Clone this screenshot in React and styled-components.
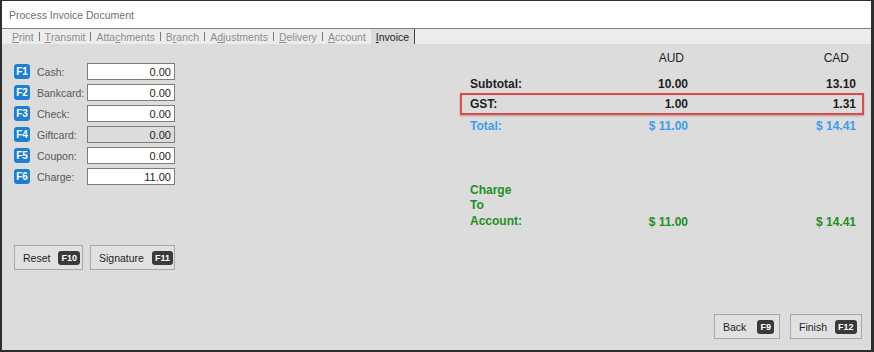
import React from "react";
import styled, { createGlobalStyle } from "styled-components";

const Global = createGlobalStyle`
  html, body { margin: 0; padding: 0; background: #ffffff; }
  body { font-family: "Liberation Sans", Arial, sans-serif; }
  * { box-sizing: border-box; }
`;

const Window = styled.div`
  width: 874px;
  height: 352px;
  display: flex;
  flex-direction: column;
  border-style: solid;
  border-color: #2e2e2e;
  border-width: 1px 3px 2px 2px;
  background: #dcdcdc;
  overflow: hidden;
`;

const TitleBar = styled.div`
  height: 28px;
  flex: none;
  background: #ffffff;
  border-bottom: 1px solid #7f7f7f;
  display: flex;
  align-items: center;
  padding-left: 7px;
  font-size: 10.5px;
  color: #707070;
`;

const TabStrip = styled.div`
  height: 15px;
  flex: none;
  background: #ececec;
  display: flex;
  align-items: stretch;
  padding-left: 5px;
  font-size: 10.5px;
`;

const Tab = styled.div`
  display: flex;
  align-items: center;
  padding: 0 5px;
  color: ${(p) => (p.$active ? "#1e1e1e" : "#8c8c8c")};
  background: ${(p) => (p.$active ? "#dcdcdc" : "transparent")};
  border-right: ${(p) => (p.$active ? "1px solid #444" : "none")};
  u { text-decoration: underline; }
`;

const Sep = styled.div`
  width: 1px;
  height: 9px;
  align-self: center;
  background: #7a7a7a;
`;

const Body = styled.div`
  flex: 1;
  display: flex;
  flex-direction: column;
  padding-bottom: 11px;
`;

const Top = styled.div`
  display: flex;
`;

const LeftPane = styled.div`
  width: 458px;
  padding: 19px 0 0 12px;
  display: flex;
  flex-direction: column;
`;

const PayRows = styled.div`
  display: flex;
  flex-direction: column;
  gap: 4px;
`;

const PayRow = styled.div`
  display: flex;
  align-items: center;
  height: 17px;
`;

const FKey = styled.span`
  width: 16px;
  height: 15px;
  border-radius: 3px;
  background: #1b7fd3;
  color: #ffffff;
  font-size: 10px;
  font-weight: bold;
  display: flex;
  align-items: center;
  justify-content: center;
`;

const PayLabel = styled.span`
  width: 57px;
  padding-left: 7px;
  font-size: 10.5px;
  color: #595959;
  white-space: nowrap;
`;

const Amount = styled.div`
  width: 88px;
  height: 17px;
  border: 1px solid #7c7c7c;
  background: ${(p) => (p.$disabled ? "#dcdcdc" : "#ffffff")};
  font-size: 11px;
  color: #1e1e1e;
  display: flex;
  align-items: center;
  justify-content: flex-end;
  padding-right: 3px;
`;

const ButtonRow = styled.div`
  display: flex;
  gap: 7px;
  margin-top: 60px;
`;

const Button = styled.div`
  width: ${(p) => p.$w}px;
  height: 25px;
  border: 1px solid #a8a8a8;
  background: #e1e1e1;
  display: flex;
  align-items: center;
  justify-content: space-between;
  padding: 0 5px 0 8px;
  font-size: 10.5px;
  color: #1e1e1e;
`;

const KeyBadge = styled.span`
  background: #3a3a3a;
  color: #ffffff;
  font-size: 9px;
  font-weight: bold;
  border-radius: 3px;
  padding: 2px 3px;
  line-height: 10px;
  margin-left: 8px;
`;

const RightPane = styled.div`
  width: 404px;
  padding-top: 6px;
  display: flex;
  flex-direction: column;
`;

const SumRow = styled.div`
  display: grid;
  grid-template-columns: 130px 88px 168px;
  align-items: center;
  height: ${(p) => p.$h || 16}px;
  margin-top: ${(p) => p.$mt || 0}px;
  padding-left: 10px;
  font-size: 12px;
  font-weight: ${(p) => (p.$head ? "normal" : "bold")};
  color: ${(p) => p.$color || "#1e1e1e"};
  border: ${(p) => (p.$boxed ? "2px solid #e54848" : "none")};
  ${(p) => (p.$boxed ? "padding-left: 8px; box-shadow: 0 1px 2px rgba(0,0,0,0.25);" : "")}
  ${(p) => (p.$bottom ? "align-items: end;" : "")}
`;

const Cell = styled.span`
  text-align: right;
  padding-right: ${(p) => p.$pr || 0}px;
`;

const LabelCell = styled.span`
  line-height: 15.5px;
`;

const Footer = styled.div`
  margin-top: auto;
  display: flex;
  justify-content: flex-end;
  gap: 10px;
  padding-right: 9px;
`;

const tabs = [
  ["", "P", "rint"],
  ["", "T", "ransmit"],
  ["Atta", "c", "hments"],
  ["B", "r", "anch"],
  ["A", "d", "justments"],
  ["", "D", "elivery"],
  ["", "A", "ccount"],
];

const pays = [
  ["F1", "Cash:", "0.00"],
  ["F2", "Bankcard:", "0.00"],
  ["F3", "Check:", "0.00"],
  ["F4", "Giftcard:", "0.00", true],
  ["F5", "Coupon:", "0.00"],
  ["F6", "Charge:", "11.00"],
];

export default function App() {
  return (
    <>
      <Global />
      <Window>
        <TitleBar>Process Invoice Document</TitleBar>
        <TabStrip>
          {tabs.map(([a, b, c], i) => (
            <React.Fragment key={i}>
              <Tab>
                {a}
                <u>{b}</u>
                {c}
              </Tab>
              {i < tabs.length - 1 && <Sep />}
            </React.Fragment>
          ))}
          <Tab $active>
            <u>I</u>nvoice
          </Tab>
        </TabStrip>
        <Body>
          <Top>
            <LeftPane>
              <PayRows>
                {pays.map(([k, l, v, d]) => (
                  <PayRow key={k}>
                    <FKey>{k}</FKey>
                    <PayLabel>{l}</PayLabel>
                    <Amount $disabled={d}>{v}</Amount>
                  </PayRow>
                ))}
              </PayRows>
              <ButtonRow>
                <Button $w={69}>
                  Reset <KeyBadge>F10</KeyBadge>
                </Button>
                <Button $w={85}>
                  Signature <KeyBadge>F11</KeyBadge>
                </Button>
              </ButtonRow>
            </LeftPane>
            <RightPane>
              <SumRow $head>
                <span />
                <Cell $pr={4}>AUD</Cell>
                <Cell $pr={7}>CAD</Cell>
              </SumRow>
              <SumRow $mt={10}>
                <span>Subtotal:</span>
                <Cell>10.00</Cell>
                <Cell>13.10</Cell>
              </SumRow>
              <SumRow $boxed $h={22} $mt={1}>
                <span>GST:</span>
                <Cell>1.00</Cell>
                <Cell>1.31</Cell>
              </SumRow>
              <SumRow $mt={3} $color="#3d9cf0">
                <span>Total:</span>
                <Cell>$ 11.00</Cell>
                <Cell>$ 14.41</Cell>
              </SumRow>
              <SumRow $mt={48} $h={47} $color="#1f8f1f" $bottom>
                <LabelCell>
                  Charge
                  <br />
                  To
                  <br />
                  Account:
                </LabelCell>
                <Cell>$ 11.00</Cell>
                <Cell>$ 14.41</Cell>
              </SumRow>
            </RightPane>
          </Top>
          <Footer>
            <Button $w={66}>
              Back <KeyBadge>F9</KeyBadge>
            </Button>
            <Button $w={72}>
              Finish <KeyBadge>F12</KeyBadge>
            </Button>
          </Footer>
        </Body>
      </Window>
    </>
  );
}
